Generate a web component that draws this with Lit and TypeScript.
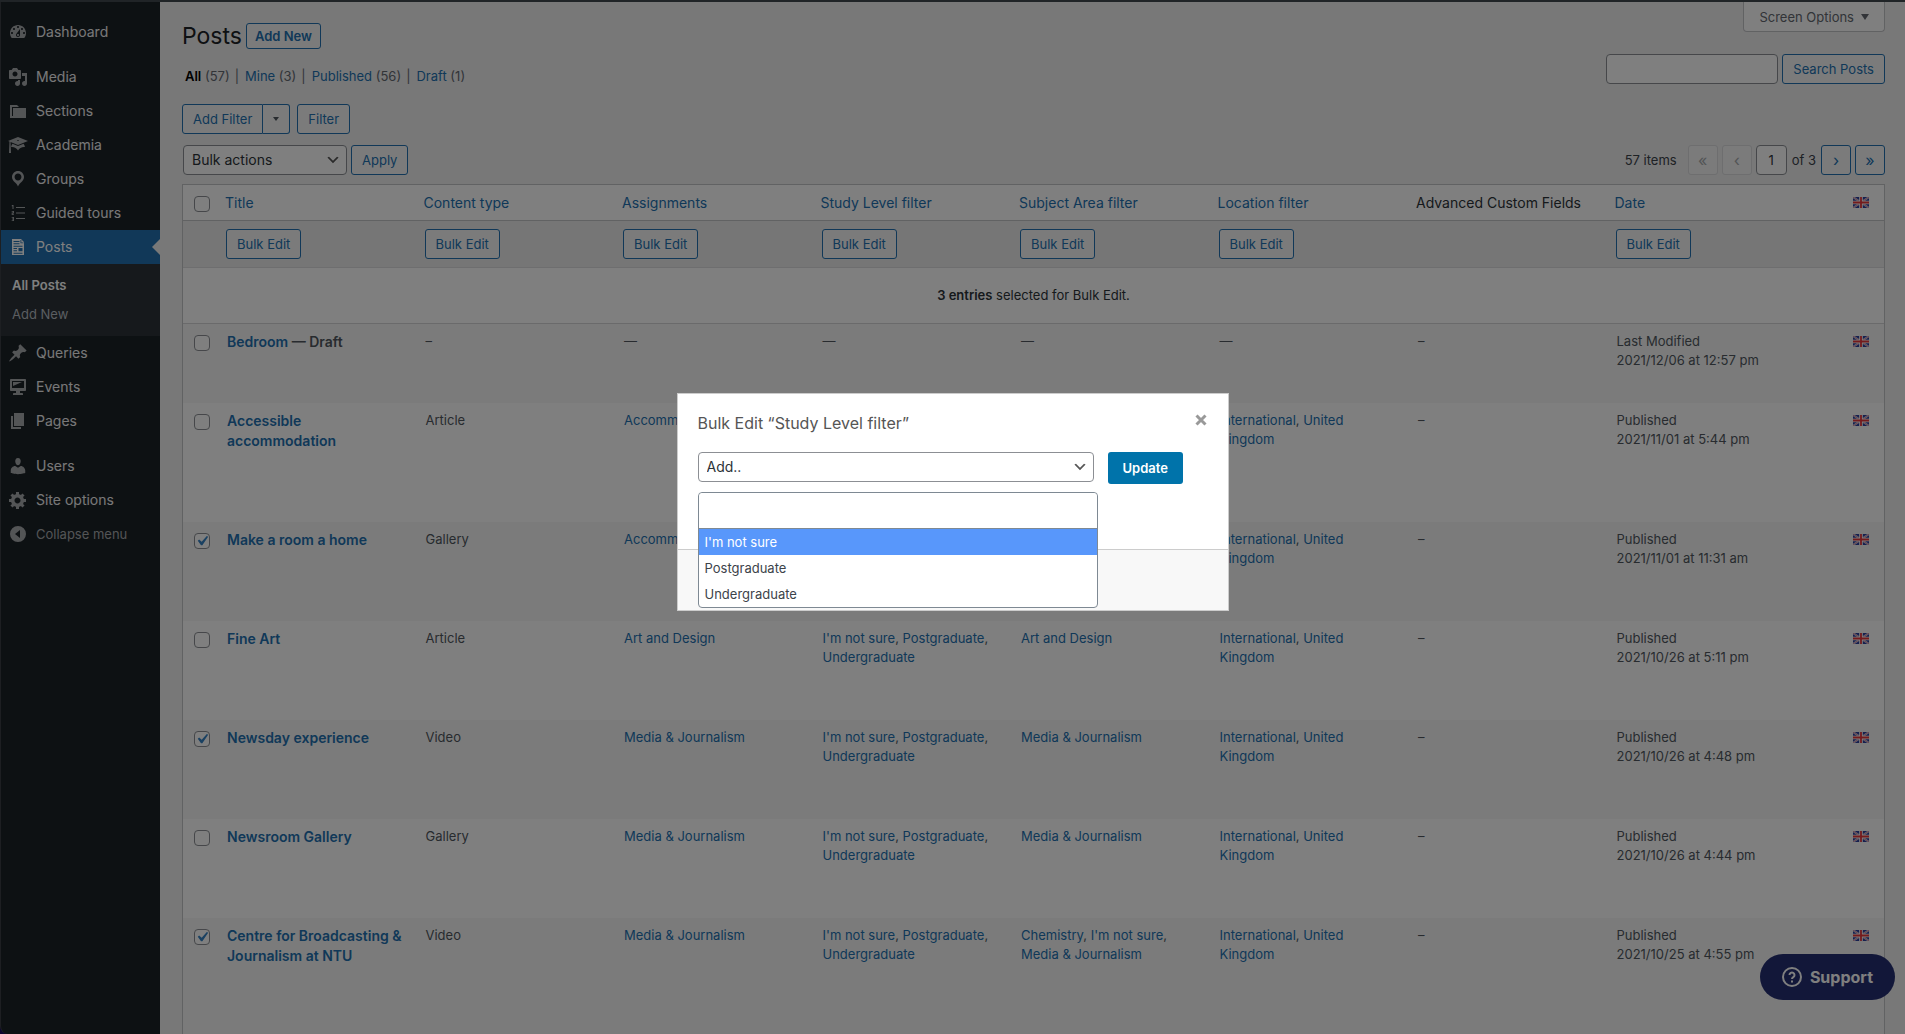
import { LitElement, html, css, svg, nothing } from "lit";
import { customElement, property } from "lit/decorators.js";

const ICONS: Record<string, string> = {
  dashboard:
    "M3.76 16h12.48c1.1-1.37 1.76-3.11 1.76-5 0-4.42-3.58-8-8-8s-8 3.58-8 8c0 1.89.66 3.63 1.76 5zM10 4c.55 0 1 .45 1 1s-.45 1-1 1-1-.45-1-1 .45-1 1-1zM6 6c.55 0 1 .45 1 1s-.45 1-1 1-1-.45-1-1 .45-1 1-1zm8 0c.55 0 1 .45 1 1s-.45 1-1 1-1-.45-1-1 .45-1 1-1zm-5.37 5.55L12 7v6c0 1.1-.9 2-2 2s-2-.9-2-2c0-.57.24-1.08.63-1.45zM4 10c.55 0 1 .45 1 1s-.45 1-1 1-1-.45-1-1 .45-1 1-1zm12 0c.55 0 1 .45 1 1s-.45 1-1 1-1-.45-1-1 .45-1 1-1zm-5 3c0-.55-.45-1-1-1s-1 .45-1 1 .45 1 1 1 1-.45 1-1z",
  media:
    "M13 11V4c0-.55-.45-1-1-1h-1.67L9 1H5L3.67 3H2c-.55 0-1 .45-1 1v7c0 .55.45 1 1 1h10c.55 0 1-.45 1-1zM7 4.5c1.38 0 2.5 1.12 2.5 2.5S8.38 9.5 7 9.5 4.5 8.38 4.5 7 5.62 4.5 7 4.5zM14 6h5v10.5c0 1.38-1.12 2.5-2.5 2.5S14 17.88 14 16.5s1.12-2.5 2.5-2.5c.17 0 .34.02.5.05V9h-3V6zm-4 8.05V13h2v3.5c0 1.38-1.12 2.5-2.5 2.5S7 17.88 7 16.5 8.12 14 9.5 14c.17 0 .34.02.5.05z",
  sections: "M5 7h13v10H2V4h7l2 2H4v9h1V7z",
  academia:
    "M10 10L2.54 7.02 3 18H1l.48-11.41L0 6l10-4 10 4zm0-5c-.55 0-1 .22-1 .5s.45.5 1 .5 1-.22 1-.5-.45-.5-1-.5zm0 6l5.57-2.23c.71.94 1.2 2.07 1.36 3.3-.3-.04-.61-.07-.93-.07-2.55 0-4.78 1.37-6 3.41C8.78 13.37 6.55 12 4 12c-.32 0-.63.03-.93.07.16-1.23.65-2.36 1.36-3.3z",
  groups:
    "M10 2C6.69 2 4 4.69 4 8c0 2.02 1.17 3.71 2.53 4.89.43.37 1.18.96 1.85 1.83.74.97 1.41 2.01 1.62 2.71.21-.7.88-1.74 1.62-2.71.67-.87 1.42-1.46 1.85-1.83C14.83 11.71 16 10.02 16 8c0-3.31-2.69-6-6-6zm0 2.56c1.9 0 3.44 1.54 3.44 3.44S11.9 11.44 10 11.44 6.56 9.9 6.56 8 8.1 4.56 10 4.56z",
  tours:
    "M8 4h9v1H8zM8 9.5h9v1H8zM8 15h9v1H8zM4.3 2H5.5v4H4.5V3.2h-.8v-.7zM3.7 8H6v2.4H4.6v.8H6v.8H3.7V9.6h1.4v-.8H3.7zM3.7 14H6v4H3.7v-.8h1.4v-.8h-1v-.8h1v-.8H3.7z",
  posts:
    "M4 2h9l3 3v13H4zM5.500 4v1h6V4zm0 2.300v1h6v-1zm0 2.400v1h9v-1zm0 2.300v1h3.500v-1zm0 2.300v1h3.500v-1zM10.500 11v3.300h4V11zM5.500 15.700v1h9v-1zM12.500 3v3.200h3v-.8h-2.200V3z",
  queries:
    "M10.44 3.02l1.82-1.82 6.36 6.35-1.83 1.82c-1.05-.68-2.48-.57-3.41.36l-.75.75c-.92.93-1.04 2.35-.35 3.41l-1.83 1.82-2.41-2.41-2.8 2.79c-.42.42-3.38 2.71-3.8 2.29s1.86-3.39 2.28-3.81l2.79-2.79L4.1 9.36l1.83-1.82c1.05.69 2.48.57 3.4-.36l.75-.75c.93-.92 1.05-2.35.36-3.41z",
  events:
    "M3 2h14c.55 0 1 .45 1 1v10c0 .55-.45 1-1 1h-5v2h2c.55 0 1 .45 1 1v1H5v-1c0-.55.45-1 1-1h2v-2H3c-.55 0-1-.45-1-1V3c0-.55.45-1 1-1zm13 9V4H4v7h12zM5 5h9L5 9V5z",
  pages: "M6 15V2h10v13H6zm-1 1h8v2H3V5h2v11z",
  users:
    "M10 9.25c-2.27 0-2.73-3.44-2.73-3.44C7 4.02 7.82 2 9.97 2c2.16 0 2.98 2.02 2.71 3.81 0 0-.41 3.44-2.68 3.44zm0 2.57L12.72 10c2.39 0 4.52 2.33 4.52 4.53v2.49s-3.65 1.13-7.24 1.13c-3.65 0-7.24-1.13-7.24-1.13v-2.49c0-2.25 1.94-4.48 4.47-4.48z",
  options:
    "M18 12h-2.18c-.17.7-.44 1.35-.81 1.93l1.54 1.54-2.1 2.1-1.54-1.54c-.58.36-1.23.63-1.91.79V19H8v-2.18c-.68-.16-1.33-.43-1.91-.79l-1.54 1.54-2.12-2.12 1.54-1.54c-.36-.58-.63-1.23-.79-1.91H1V9.03h2.17c.16-.7.44-1.35.8-1.94L2.43 5.55l2.1-2.1 1.54 1.54c.58-.37 1.24-.64 1.93-.81V2h3v2.18c.68.16 1.33.43 1.91.79l1.54-1.54 2.12 2.12-1.54 1.54c.36.59.64 1.24.8 1.94H18V12zm-8.5 1.5c1.66 0 3-1.34 3-3s-1.34-3-3-3-3 1.34-3 3 1.34 3 3 3z",
  collapse: "M10 2a8 8 0 1 0 0 16 8 8 0 0 0 0-16zM12 6v8L7 10z",
};

const icon = (name: string) => html`
  <svg class="icon" viewBox="0 0 20 20" aria-hidden="true">
    ${svg`<path fill="currentColor" fill-rule="evenodd" d=${ICONS[name]}></path>`}
  </svg>
`;

const flag = html`
  <svg class="flag" viewBox="0 0 16 11" role="img" aria-label="English">
    <rect width="16" height="11" fill="#2c3f9c" />
    <path d="M0 0L16 11M16 0L0 11" stroke="#c9cde6" stroke-width="2" />
    <path d="M0 0L16 11M16 0L0 11" stroke="#e0606a" stroke-width="0.600" />
    <path d="M8 0V11M0 5.500H16" stroke="#fff" stroke-width="3.600" />
    <path d="M8 0V11M0 5.500H16" stroke="#e8363b" stroke-width="1.800" />
  </svg>
`;

const MENU: { id: string; label: string; gap?: boolean }[] = [
  { id: "dashboard", label: "Dashboard" },
  { id: "media", label: "Media", gap: true },
  { id: "sections", label: "Sections" },
  { id: "academia", label: "Academia" },
  { id: "groups", label: "Groups" },
  { id: "tours", label: "Guided tours" },
  { id: "posts", label: "Posts" },
  { id: "queries", label: "Queries" },
  { id: "events", label: "Events" },
  { id: "pages", label: "Pages" },
  { id: "users", label: "Users", gap: true },
  { id: "options", label: "Site options" },
];

@customElement("admin-menu")
export class AdminMenu extends LitElement {
  static styles = css`
    :host {
      display: block;
      box-sizing: border-box;
      flex: 0 0 160px;
      padding-top: 13px;
      background: #1b2227;
      border-left: 1px solid #3a3f44;
      border-bottom-left-radius: 8px;
      font-size: 14px;
      line-height: 18px;
    }
    ul {
      list-style: none;
      margin: 0;
      padding: 0;
    }
    a,
    button {
      color: #f0f0f1;
      text-decoration: none;
      font: inherit;
    }
    .item {
      display: flex;
      align-items: center;
      position: relative;
      width: 100%;
      height: 34px;
      padding: 0;
      border: 0;
      background: none;
      text-align: left;
    }
    .gap {
      margin-top: 11px;
    }
    .icon {
      width: 20px;
      height: 20px;
      margin: 0 8px 0 7px;
      color: #a7aaad;
    }
    .current {
      background: #2271b1;
      color: #fff;
    }
    .current .icon {
      color: #fff;
    }
    .current::after {
      content: "";
      position: absolute;
      right: 0;
      top: 9px;
      border: 8px solid transparent;
      border-left-width: 0;
      border-right-color: #f0f0f1;
    }
    .submenu {
      display: flex;
      flex-direction: column;
      gap: 11px;
      padding: 12px 11px;
      background: #2c3338;
      font-size: 13px;
      height: 48px;
    }
    .submenu a {
      color: #b6bcc2;
    }
    .submenu .active {
      color: #fff;
      font-weight: 600;
    }
    .collapse {
      color: #a7aaad;
      font-size: 13px;
    }
  `;

  render() {
    return html`
      <nav aria-label="Main menu">
        <ul>
          ${MENU.map(
            (m) => html`
              <li class=${m.gap ? "gap" : ""}>
                <a href="#${m.id}" class="item ${m.id === "posts" ? "current" : ""}">
                  ${icon(m.id)}<span>${m.label}</span>
                </a>
                ${m.id === "posts"
                  ? html`<div class="submenu">
                      <a class="active" href="#all-posts">All Posts</a>
                      <a href="#add-new">Add New</a>
                    </div>`
                  : nothing}
              </li>
            `
          )}
        </ul>
        <button class="item collapse" type="button">
          ${icon("collapse")}<span>Collapse menu</span>
        </button>
      </nav>
    `;
  }
}

const controls = css`
  button,
  input,
  select {
    box-sizing: border-box;
    margin: 0;
    font: inherit;
  }
  a {
    color: #2271b1;
    text-decoration: none;
  }
  .btn {
    height: 30px;
    padding: 0 10px;
    border: 1px solid #2271b1;
    border-radius: 3px;
    background: #f6f7f7;
    color: #2271b1;
    font-size: 13px;
    line-height: 28px;
    white-space: nowrap;
  }
  .field {
    height: 30px;
    padding: 0 8px;
    border: 1px solid #8c8f94;
    border-radius: 4px;
    background: #fff;
    color: #2c3338;
    font-size: 14px;
  }
  select.field {
    appearance: none;
    padding: 0 24px 0 8px;
    background: #fff
      url("data:image/svg+xml,%3Csvg xmlns='http://www.w3.org/2000/svg' viewBox='0 0 20 20'%3E%3Cpath d='M5 6l5 5 5-5 2 1-7 7-7-7 2-1z' fill='%23555'/%3E%3C/svg%3E")
      no-repeat right 5px center / 16px 16px;
  }
`;

interface Post {
  title: string;
  state?: string;
  type: string;
  assignments?: string[];
  study?: string[];
  subject?: string[];
  location?: string[];
  status: string;
  date: string;
  checked?: boolean;
  size: "short" | "medium" | "tall";
}

const STUDY = ["I'm not sure", "Postgraduate", "Undergraduate"];
const UK = ["International", "United Kingdom"];
const MJ = ["Media & Journalism"];

const POSTS: Post[] = [
  { title: "Bedroom", state: "Draft", type: "–", assignments: ["—"], study: ["—"], subject: ["—"], location: ["—"], status: "Last Modified", date: "2021/12/06 at 12:57 pm", size: "short" },
  { title: "Accessible accommodation", type: "Article", assignments: ["Accommodation"], location: UK, status: "Published", date: "2021/11/01 at 5:44 pm", size: "tall" },
  { title: "Make a room a home", type: "Gallery", assignments: ["Accommodation"], location: UK, status: "Published", date: "2021/11/01 at 11:31 am", checked: true, size: "medium" },
  { title: "Fine Art", type: "Article", assignments: ["Art and Design"], study: STUDY, subject: ["Art and Design"], location: UK, status: "Published", date: "2021/10/26 at 5:11 pm", size: "medium" },
  { title: "Newsday experience", type: "Video", assignments: MJ, study: STUDY, subject: MJ, location: UK, status: "Published", date: "2021/10/26 at 4:48 pm", checked: true, size: "medium" },
  { title: "Newsroom Gallery", type: "Gallery", assignments: MJ, study: STUDY, subject: MJ, location: UK, status: "Published", date: "2021/10/26 at 4:44 pm", size: "medium" },
  { title: "Centre for Broadcasting & Journalism at NTU", type: "Video", assignments: MJ, study: STUDY, subject: ["Chemistry", "I'm not sure", "Media & Journalism"], location: UK, status: "Published", date: "2021/10/25 at 4:55 pm", checked: true, size: "tall" },
];

@customElement("posts-table")
export class PostsTable extends LitElement {
  static styles = [
    controls,
    css`
      :host {
        display: block;
      }
      table {
        width: 100%;
        table-layout: fixed;
        border: 1px solid #c3c4c7;
        border-spacing: 0;
        background: #fff;
        color: #50575e;
        font-size: 13px;
        line-height: 19px;
      }
      .col-check {
        width: 34px;
      }
      .col-data {
        width: 11.67%;
      }
      .col-flag {
        width: 41px;
      }
      th,
      td {
        padding: 8px 10px;
        text-align: left;
        vertical-align: top;
        font-weight: 400;
      }
      .heads th {
        height: 19px;
        padding: 8px;
        border-bottom: 1px solid #c3c4c7;
        color: #2c3338;
        font-size: 14px;
        white-space: nowrap;
      }
      .bulk td {
        padding: 8px 9px;
        background: #ededed;
        border-bottom: 1px solid #dcdcde;
      }
      .bulk .btn {
        display: block;
      }
      .notice td {
        height: 39px;
        border-bottom: 1px solid #d5d5d7;
        text-align: center;
        vertical-align: middle;
        color: #2c3338;
      }
      .short td {
        height: 63px;
      }
      .medium td {
        height: 83px;
      }
      .tall td {
        height: 103px;
      }
      .odd {
        background: #f6f7f7;
      }
      .title {
        color: #50575e;
        font-size: 14px;
        font-weight: 600;
        line-height: 20px;
      }
      strong {
        font-weight: 600;
      }
      tr .check,
      .heads .check {
        box-sizing: border-box;
        padding: 11px 0 0 11px;
        line-height: 0;
      }
      .flag-cell,
      .heads .flag-cell {
        padding-left: 10px;
        padding-right: 0;
      }
      .flag {
        display: block;
        width: 16px;
        height: 11px;
        margin-top: 4px;
      }
      input[type="checkbox"] {
        appearance: none;
        width: 16px;
        height: 16px;
        border: 1px solid #8c8f94;
        border-radius: 4px;
        background: #fff;
      }
      input[type="checkbox"]:checked {
        background: #fff
          url("data:image/svg+xml,%3Csvg xmlns='http://www.w3.org/2000/svg' viewBox='0 0 20 20'%3E%3Cpath d='M14.83 4.89l1.34.94-5.81 8.38H9.02L5.78 9.67l1.34-1.25 2.57 2.4z' fill='%233582c4'/%3E%3C/svg%3E")
          no-repeat center / 20px 20px;
      }
    `,
  ];

  private terms(list?: string[]) {
    if (!list) return nothing;
    return list.map((t, i) =>
      t === "—" ? t : html`${i ? ", " : ""}<a href="#term">${t}</a>`
    );
  }

  render() {
    const heads = ["Title", "Content type", "Assignments", "Study Level filter", "Subject Area filter", "Location filter", "Advanced Custom Fields", "Date"];
    return html`
      <table>
        <colgroup>
          <col class="col-check" />
          ${heads.slice(0, 7).map(() => html`<col class="col-data" />`)}
          <col />
          <col class="col-flag" />
        </colgroup>
        <thead>
          <tr class="heads">
            <th class="check"><input type="checkbox" aria-label="Select all" /></th>
            ${heads.map(
              (h) => html`<th scope="col">
                ${h === "Advanced Custom Fields" ? h : html`<a href="#sort">${h}</a>`}
              </th>`
            )}
            <th class="flag-cell">${flag}</th>
          </tr>
        </thead>
        <tbody>
          <tr class="bulk">
            <td></td>
            ${heads.map(
              (h) => html`<td>
                ${h === "Advanced Custom Fields"
                  ? nothing
                  : html`<button class="btn" type="button">Bulk Edit</button>`}
              </td>`
            )}
            <td></td>
          </tr>
          <tr class="notice">
            <td colspan="10"><strong>3 entries</strong> selected for Bulk Edit.</td>
          </tr>
          ${POSTS.map(
            (p, i) => html`
              <tr class="${p.size} ${i % 2 ? "" : "odd"}">
                <td class="check">
                  <input type="checkbox" aria-label="Select ${p.title}" ?checked=${p.checked} />
                </td>
                <td class="title">
                  <a href="#edit">${p.title}</a>${p.state ? html` — ${p.state}` : nothing}
                </td>
                <td>${p.type}</td>
                <td>${this.terms(p.assignments)}</td>
                <td>${this.terms(p.study)}</td>
                <td>${this.terms(p.subject)}</td>
                <td>${this.terms(p.location)}</td>
                <td>–</td>
                <td>${p.status}<br />${p.date}</td>
                <td class="flag-cell">${flag}</td>
              </tr>
            `
          )}
        </tbody>
      </table>
    `;
  }
}

@customElement("bulk-edit-dialog")
export class BulkEditDialog extends LitElement {
  @property() column = "Study Level filter";

  static styles = [
    controls,
    css`
      :host {
        display: flex;
        align-items: center;
        justify-content: center;
        position: fixed;
        inset: 0;
        padding-bottom: 30px;
        background: rgba(0, 0, 0, 0.5);
      }
      .dialog {
        width: 550px;
        border: 1px solid #ccc;
        background: #fff;
      }
      .main {
        box-sizing: border-box;
        min-height: 155px;
        padding: 19px 20px;
      }
      .top {
        display: flex;
        justify-content: space-between;
        margin-bottom: 19px;
      }
      h2 {
        margin: 0;
        color: #555;
        font-size: 16px;
        font-weight: 400;
        line-height: 20px;
      }
      .close {
        width: 14px;
        height: 14px;
        padding: 0;
        border: 0;
        background: none;
        color: #999;
      }
      .close svg {
        display: block;
        width: 14px;
        height: 14px;
      }
      .row {
        display: flex;
        align-items: flex-start;
        gap: 14px;
      }
      .picker {
        position: relative;
      }
      .mode {
        display: block;
        width: 396px;
      }
      .update {
        height: 32px;
        padding: 0 15px;
        border: 0;
        background: #0073aa;
        color: #fff;
        font-weight: 600;
      }
      .drop {
        position: absolute;
        top: 40px;
        left: 0;
        width: 398px;
        border: 1px solid #7e8993;
        border-radius: 4px;
        background: #fff;
      }
      .term {
        display: block;
        width: 100%;
        height: 36px;
        border: 0;
        border-bottom: 1px solid #7e8993;
        border-radius: 4px 4px 0 0;
        background: #fff;
      }
      ul {
        margin: 0;
        padding: 0;
        list-style: none;
        color: #3c434a;
        font-size: 13px;
      }
      li {
        padding: 0 6px;
        line-height: 26px;
      }
      .on {
        background: #5897fb;
        color: #fff;
      }
      .foot {
        height: 60px;
        border-top: 1px solid #ccc;
        background: #f8f8f8;
      }
    `,
  ];

  render() {
    return html`
      <section class="dialog" role="dialog" aria-labelledby="heading">
        <div class="main">
          <div class="top">
            <h2 id="heading">Bulk Edit “${this.column}”</h2>
            <button class="close" type="button" aria-label="Close">
              <svg viewBox="0 0 14 14">
                <path d="M2.500 2.500l9 9M11.500 2.500l-9 9" stroke="currentColor" stroke-width="3" />
              </svg>
            </button>
          </div>
          <div class="row">
            <div class="picker">
              <select class="field mode" aria-label="Edit mode">
                <option>Add..</option>
              </select>
              <div class="drop">
                <input class="term" type="text" aria-label="Find a term" />
                <ul role="listbox">
                  ${STUDY.map(
                    (t, i) => html`<li role="option" aria-selected=${i === 0} class=${i === 0 ? "on" : ""}>${t}</li>`
                  )}
                </ul>
              </div>
            </div>
            <button class="btn update" type="button">Update</button>
          </div>
        </div>
        <div class="foot"></div>
      </section>
    `;
  }
}

@customElement("app-root")
export class AppRoot extends LitElement {
  static styles = [
    controls,
    css`
      :host {
        display: flex;
        flex-direction: column;
        height: 100vh;
        overflow: hidden;
        background: #1a0a5c;
        color: #3c434a;
        font-family: Inter, "Liberation Sans", sans-serif;
        font-size: 13px;
        line-height: 20px;
      }
      .bar {
        flex: 0 0 2px;
        background: #40484f;
      }
      .shell {
        display: flex;
        flex: 1;
        min-height: 0;
      }
      main {
        flex: 1;
        min-width: 0;
        padding: 0 20px 0 22px;
        background: #f0f0f1;
        overflow: hidden;
      }
      .top {
        display: flex;
        justify-content: space-between;
        align-items: flex-start;
        height: 52px;
      }
      .heading {
        display: flex;
        align-items: center;
        gap: 4px;
        padding-top: 21px;
      }
      h1 {
        margin: 0;
        color: #1d2327;
        font-size: 23px;
        font-weight: 400;
        line-height: 26px;
      }
      .add {
        height: 26px;
        padding: 0 8px;
        line-height: 24px;
        font-weight: 600;
      }
      .screen {
        height: 30px;
        padding: 0 15px;
        border: 1px solid #c3c4c7;
        border-top: 0;
        border-radius: 0 0 4px 4px;
        background: #fff;
        color: #646970;
        display: flex;
        align-items: center;
        gap: 7px;
      }
      .down {
        border: 4px solid transparent;
        border-top: 6px solid currentColor;
        border-bottom: 0;
      }
      .line {
        display: flex;
        justify-content: space-between;
      }
      .views {
        display: flex;
        gap: 5px;
        margin: 0;
        padding: 12px 0 0 3px;
        list-style: none;
        color: #646970;
      }
      .views li + li::before {
        content: "|";
        margin-right: 6px;
      }
      .views .here {
        color: #000;
        font-weight: 600;
      }
      .search,
      .actions,
      .pages {
        display: flex;
        align-items: center;
        gap: 4px;
      }
      .search {
        align-items: flex-start;
      }
      .search .field {
        width: 172px;
      }
      .filters {
        display: flex;
        gap: 7px;
        margin: 18px 0 11px;
      }
      .split {
        display: flex;
      }
      .split .btn:first-child {
        border-radius: 3px 0 0 3px;
      }
      .split .btn:last-child {
        border-left: 0;
        border-radius: 0 3px 3px 0;
      }
      .more {
        display: flex;
        align-items: center;
        color: #50575e;
      }
      .more .down {
        border-width: 4px 3px 0;
      }
      .actions {
        padding-left: 1px;
      }
      .actions .field {
        width: 164px;
      }
      .count {
        margin-right: 7px;
      }
      .pages .btn {
        width: 30px;
        padding: 0;
        font-size: 16px;
      }
      .pages .btn:disabled {
        border-color: #dcdcde;
        color: #a7aaad;
      }
      .pages .field {
        width: 31px;
        padding: 0;
        text-align: center;
        font-size: 13px;
      }
      .total {
        margin: 0 1px;
      }
      posts-table {
        margin-top: 9px;
      }
      .support {
        position: fixed;
        right: 10px;
        bottom: 34px;
        display: flex;
        align-items: center;
        gap: 8px;
        height: 46px;
        padding: 0 22px;
        border: 0;
        border-radius: 23px;
        background: #242e72;
        color: #fff;
        font-size: 16px;
        font-weight: 700;
      }
      .support svg {
        width: 20px;
        height: 20px;
      }
    `,
  ];

  render() {
    const views: [string, number][] = [["All", 57], ["Mine", 3], ["Published", 56], ["Draft", 1]];
    return html`
      <div class="bar"></div>
      <div class="shell">
        <admin-menu></admin-menu>
        <main>
          <div class="top">
            <div class="heading">
              <h1>Posts</h1>
              <button class="btn add" type="button">Add New</button>
            </div>
            <button class="screen" type="button">Screen Options <span class="down"></span></button>
          </div>
          <div class="line">
            <ul class="views">
              ${views.map(
                ([name, n], i) => html`<li><a href="#view" class=${i === 0 ? "here" : ""}>${name}</a> (${n})</li>`
              )}
            </ul>
            <div class="search">
              <input class="field" type="search" aria-label="Search Posts" />
              <button class="btn" type="button">Search Posts</button>
            </div>
          </div>
          <div class="filters">
            <div class="split">
              <button class="btn" type="button">Add Filter</button>
              <button class="btn more" type="button" aria-label="More filters"><span class="down"></span></button>
            </div>
            <button class="btn" type="button">Filter</button>
          </div>
          <div class="line">
            <div class="actions">
              <select class="field" aria-label="Bulk actions">
                <option>Bulk actions</option>
              </select>
              <button class="btn" type="button">Apply</button>
            </div>
            <div class="pages">
              <span class="count">57 items</span>
              <button class="btn" type="button" aria-label="First page" disabled>«</button>
              <button class="btn" type="button" aria-label="Previous page" disabled>‹</button>
              <input class="field" type="text" aria-label="Current page" value="1" />
              <span class="total">of 3</span>
              <button class="btn" type="button" aria-label="Next page">›</button>
              <button class="btn" type="button" aria-label="Last page">»</button>
            </div>
          </div>
          <posts-table></posts-table>
        </main>
      </div>
      <button class="support" type="button">
        <svg viewBox="0 0 20 20" aria-hidden="true" fill="none" stroke="currentColor" stroke-width="2">
          <circle cx="10" cy="10" r="9" />
          <path d="M7.500 8a2.500 2.500 0 1 1 3.800 2.100c-.9.600-1.300 1-1.300 2M10 13.500v2" />
        </svg>
        Support
      </button>
      <bulk-edit-dialog></bulk-edit-dialog>
    `;
  }
}
